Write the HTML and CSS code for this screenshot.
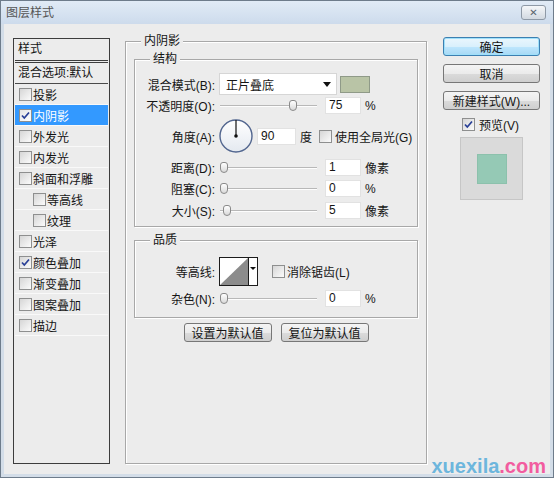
FILE: index.html
```html
<!DOCTYPE html>
<html>
<head>
<meta charset="utf-8">
<link rel="stylesheet" href="styles.css">
</head>
<body>
<div class="window">
  <div class="titlebar">
    <span class="title">图层样式</span>
    <span class="close">✕</span>
  </div>
  <div class="frame">
    <div class="content">
      <div class="panel">
        <div class="panel-head">样式</div>
        <div class="panel-blend">混合选项:默认</div>
        <ul class="fx-list">
          <li class="fx"><span class="cb"></span>投影</li>
          <li class="fx selected"><span class="cb"><svg viewBox="0 0 11 11" class="tick"><path d="M2 5.5 L4.3 8 L9 2.5"/></svg></span>内阴影</li>
          <li class="fx"><span class="cb"></span>外发光</li>
          <li class="fx"><span class="cb"></span>内发光</li>
          <li class="fx"><span class="cb"></span>斜面和浮雕</li>
          <li class="fx sub"><span class="cb"></span>等高线</li>
          <li class="fx sub"><span class="cb"></span>纹理</li>
          <li class="fx"><span class="cb"></span>光泽</li>
          <li class="fx"><span class="cb"><svg viewBox="0 0 11 11" class="tick"><path d="M2 5.5 L4.3 8 L9 2.5"/></svg></span>颜色叠加</li>
          <li class="fx"><span class="cb"></span>渐变叠加</li>
          <li class="fx"><span class="cb"></span>图案叠加</li>
          <li class="fx"><span class="cb"></span>描边</li>
        </ul>
      </div>

      <div class="group main">
        <div class="group-title main-title">内阴影</div>

        <div class="group inner structure">
          <div class="group-title">结构</div>

          <div class="row r-blend">
            <span class="lbl">混合模式(B):</span>
            <div class="select"><span>正片叠底</span><span class="arrow"></span></div>
            <span class="swatch"></span>
          </div>

          <div class="row r-opacity">
            <span class="lbl">不透明度(O):</span>
            <div class="slider"><div class="track"></div><span class="thumb" style="left:69px"></span></div>
            <span class="num">75</span>
            <span class="unit">%</span>
          </div>

          <div class="row r-angle">
            <span class="lbl">角度(A):</span>
            <svg class="dial" viewBox="0 0 34 34">
              <defs>
                <linearGradient id="dg" x1="0" y1="0" x2="0" y2="1">
                  <stop offset="0" stop-color="#ffffff"/>
                  <stop offset="1" stop-color="#e4e9f0"/>
                </linearGradient>
              </defs>
              <circle cx="17" cy="17" r="16" fill="url(#dg)" stroke="#52668f" stroke-width="1.4"/>
              <line x1="17" y1="17" x2="17" y2="1" stroke="#111" stroke-width="1.2"/>
              <circle cx="17" cy="17" r="1.8" fill="#111"/>
            </svg>
            <span class="num angle">90</span>
            <span class="unit">度</span>
            <span class="cb global-cb"></span>
            <span class="cb-text">使用全局光(G)</span>
          </div>

          <div class="row r-distance">
            <span class="lbl">距离(D):</span>
            <div class="slider"><div class="track"></div><span class="thumb" style="left:0px"></span></div>
            <span class="num">1</span>
            <span class="unit">像素</span>
          </div>

          <div class="row r-choke">
            <span class="lbl">阻塞(C):</span>
            <div class="slider"><div class="track"></div><span class="thumb" style="left:0px"></span></div>
            <span class="num">0</span>
            <span class="unit">%</span>
          </div>

          <div class="row r-size">
            <span class="lbl">大小(S):</span>
            <div class="slider"><div class="track"></div><span class="thumb" style="left:3px"></span></div>
            <span class="num">5</span>
            <span class="unit">像素</span>
          </div>
        </div>

        <div class="group inner quality">
          <div class="group-title">品质</div>

          <div class="row r-contour">
            <span class="lbl">等高线:</span>
            <div class="contour">
              <svg class="curve" viewBox="0 0 28 27" preserveAspectRatio="none">
                <rect x="0" y="0" width="28" height="27" fill="#fff"/>
                <polygon points="0,27 28,0 28,27" fill="#8c8c8c"/>
              </svg>
              <span class="contour-drop"><span class="arrow small"></span></span>
            </div>
            <span class="cb aa-cb"></span>
            <span class="cb-text">消除锯齿(L)</span>
          </div>

          <div class="row r-noise">
            <span class="lbl">杂色(N):</span>
            <div class="slider"><div class="track"></div><span class="thumb" style="left:0px"></span></div>
            <span class="num">0</span>
            <span class="unit">%</span>
          </div>
        </div>

        <div class="defaults">
          <span class="btn wide">设置为默认值</span>
          <span class="btn wide">复位为默认值</span>
        </div>
      </div>

      <div class="side">
        <span class="btn side-btn ok">确定</span>
        <span class="btn side-btn">取消</span>
        <span class="btn side-btn">新建样式(W)...</span>
        <div class="preview-check">
          <span class="cb"><svg viewBox="0 0 11 11" class="tick"><path d="M2 5.5 L4.3 8 L9 2.5"/></svg></span>
          <span class="cb-text">预览(V)</span>
        </div>
        <div class="preview"><span class="preview-swatch"></span></div>
      </div>
    </div>
  </div>
  <div class="watermark"><span class="wm-blue">xuexila</span><span class="wm-pink">.com</span></div>
</div>
</body>
</html>
```

FILE: styles.css
```css
* { box-sizing: border-box; }
html, body { margin: 0; padding: 0; }
body {
  width: 554px;
  height: 478px;
  font-family: "Liberation Sans", "Noto Sans CJK SC", sans-serif;
  font-size: 12px;
  color: #151515;
  background: #ececec;
  overflow: hidden;
}

.window {
  position: relative;
  width: 554px;
  height: 478px;
  border: 1px solid #6e7c8b;
  display: flex;
  flex-direction: column;
  background: #d3dde8;
}

.titlebar {
  height: 23px;
  flex: none;
  display: flex;
  align-items: center;
  justify-content: space-between;
  padding: 0 7px 0 5px;
  background: linear-gradient(#e1ebf6, #cddbec);
}
.title { color: #555; line-height: 14px; }
.close {
  width: 25px;
  height: 15px;
  border: 1px solid #8e99a6;
  border-radius: 3px;
  background: linear-gradient(#f5f7f9, #d2d9e1);
  display: flex;
  align-items: center;
  justify-content: center;
  color: #59636e;
  font-size: 10px;
  font-weight: bold;
  font-family: "DejaVu Sans", sans-serif;
}

.frame {
  flex: 1;
  display: flex;
  padding: 0 3px 3px;
}
.content {
  flex: 1;
  display: flex;
  align-items: flex-start;
  padding-left: 9px;
  background: #ececec;
}

/* left panel */
.panel {
  flex: none;
  width: 97px;
  height: 426px;
  margin-top: 14px;
  border: 1px solid #3d3d3d;
  padding: 0 1px;
  display: flex;
  flex-direction: column;
}
.panel-head {
  height: 22px;
  line-height: 21px;
  padding-left: 3px;
  border-bottom: 1px solid #3d3d3d;
}
.panel-blend {
  height: 22px;
  margin-top: 1px;
  line-height: 20px;
  padding-left: 3px;
  border-top: 1px solid #3d3d3d;
  border-bottom: 1px solid #4a4a4a;
  white-space: nowrap;
}
.fx-list {
  list-style: none;
  margin: 0;
  padding: 0;
}
.fx {
  height: 21px;
  display: flex;
  align-items: center;
  padding-left: 4px;
  border-bottom: 1px solid #f9f9f9;
  white-space: nowrap;
}
.fx.sub { padding-left: 18px; }
.fx.selected { background: #3399ff; color: #fff; }

.cb {
  flex: none;
  width: 13px;
  height: 13px;
  border: 1px solid #8e8f8f;
  background: linear-gradient(135deg, #d6d6d6, #fbfbfb);
  margin-right: 1px;
  display: inline-flex;
  align-items: center;
  justify-content: center;
}
.fx.selected .cb { background: linear-gradient(135deg, #e4e4e4, #ffffff); }
.tick { width: 11px; height: 11px; }
.tick path { fill: none; stroke: #283f96; stroke-width: 1.7; }

/* group boxes */
.group {
  border: 1px solid #a8a8a8;
  box-shadow: inset 1px 1px 0 #fff, 1px 1px 0 #fff;
}
.group-title {
  width: max-content;
  height: 14px;
  line-height: 14px;
  margin: -8px 0 0 15px;
  padding: 0 3px;
  background: #ececec;
}
.main {
  flex: none;
  width: 302px;
  height: 423px;
  margin: 17px 0 0 15px;
  padding: 0 8px;
  display: flex;
  flex-direction: column;
}
.group-title.main-title { margin-left: 7px; }

.structure { margin-top: 11px; padding-bottom: 7px; }
.quality { margin-top: 13px; padding-bottom: 10px; }

.row { display: flex; align-items: center; white-space: nowrap; }
.lbl { flex: none; width: 80px; text-align: right; margin-right: 4px; }

.r-blend { height: 22px; margin-top: 7px; }
.r-opacity { height: 17px; margin-top: 2px; }
.r-angle { height: 34px; margin-top: 5px; }
.r-distance { height: 17px; margin-top: 6px; }
.r-choke { height: 17px; margin-top: 4px; }
.r-size { height: 17px; margin-top: 5px; }
.r-contour { height: 29px; margin-top: 10px; }
.r-noise { height: 17px; margin-top: 4px; }

.select {
  width: 118px;
  height: 22px;
  background: #fff;
  border: 1px solid #d6d6d6;
  display: flex;
  align-items: center;
  justify-content: space-between;
  padding: 0 5px 0 6px;
}
.arrow {
  width: 0;
  height: 0;
  border-left: 4px solid transparent;
  border-right: 4px solid transparent;
  border-top: 5px solid #111;
}
.arrow.small {
  border-left-width: 3px;
  border-right-width: 3px;
  border-top-width: 3px;
}
.swatch {
  width: 30px;
  height: 17px;
  margin-left: 3px;
  background: #b9c4a6;
  border: 1px solid #8f9a88;
}

.slider {
  position: relative;
  flex: none;
  width: 97px;
  height: 17px;
  margin-left: 1px;
  display: flex;
  align-items: center;
}
.track {
  width: 100%;
  height: 2px;
  border-top: 1px solid #b8b8b8;
  border-bottom: 1px solid #fdfdfd;
}
.thumb {
  position: absolute;
  top: 3px;
  width: 8px;
  height: 11px;
  border: 1px solid #8a8a8a;
  border-radius: 3px 3px 4px 4px;
  background: linear-gradient(#ffffff, #d9d9d9);
}

.num {
  flex: none;
  width: 36px;
  height: 17px;
  margin-left: 8px;
  background: #fff;
  border: 1px solid #e2e2e2;
  padding-left: 3px;
  line-height: 15px;
}
.num.angle { width: 39px; margin-left: 4px; }
.unit { margin-left: 4px; }
.cb-text { margin-left: 1px; }
.global-cb { margin-left: 7px; }
.global-cb + .cb-text { margin-left: 2px; }
.aa-cb { margin-left: 14px; }

.dial { flex: none; width: 34px; height: 34px; }

.contour {
  flex: none;
  width: 39px;
  height: 29px;
  border: 1px solid #1c1c1c;
  display: flex;
  background: #fff;
}
.curve { width: 28px; height: 27px; display: block; }
.contour-drop {
  flex: 1;
  border-left: 1px solid #1c1c1c;
  display: flex;
  justify-content: center;
  padding-top: 9px;
}

.defaults {
  display: flex;
  justify-content: center;
  gap: 9px;
  margin-top: 5px;
}

.btn {
  height: 19px;
  display: flex;
  align-items: center;
  justify-content: center;
  border: 1px solid #777;
  border-radius: 3px;
  background: linear-gradient(#f4f4f4 0%, #ebebeb 50%, #dbdbdb 51%, #cfcfcf 100%);
  white-space: nowrap;
}
.btn.wide { width: 88px; }

.side {
  flex: none;
  width: 97px;
  margin: 13px 0 0 16px;
  display: flex;
  flex-direction: column;
}
.side-btn { margin-bottom: 8px; }
.btn.ok {
  border-color: #3c7fb1;
  background: linear-gradient(#eaf6fd 0%, #d9f0fc 50%, #bee6fd 51%, #a7d9f5 100%);
  box-shadow: inset 0 0 0 1px #9fe0fa;
}
.preview-check {
  height: 14px;
  margin-top: -1px;
  display: flex;
  align-items: center;
  justify-content: center;
  padding-right: 2px;
}
.preview-check .cb-text { margin-left: 3px; }
.preview {
  width: 63px;
  height: 63px;
  margin: 6px 0 0 17px;
  background: #dadada;
  border: 1px solid #c6c6c6;
  display: flex;
  align-items: center;
  justify-content: center;
}
.preview-swatch {
  width: 30px;
  height: 30px;
  background: #95c9b5;
  border: 1px solid #8cc1ac;
}

.watermark {
  position: absolute;
  right: 7px;
  bottom: 1px;
  height: 20px;
  line-height: 20px;
  font-family: "Liberation Sans", sans-serif;
  font-weight: bold;
  font-size: 20px;
}
.wm-blue { color: #6db6dd; }
.wm-pink { color: #f25c9f; }
```
